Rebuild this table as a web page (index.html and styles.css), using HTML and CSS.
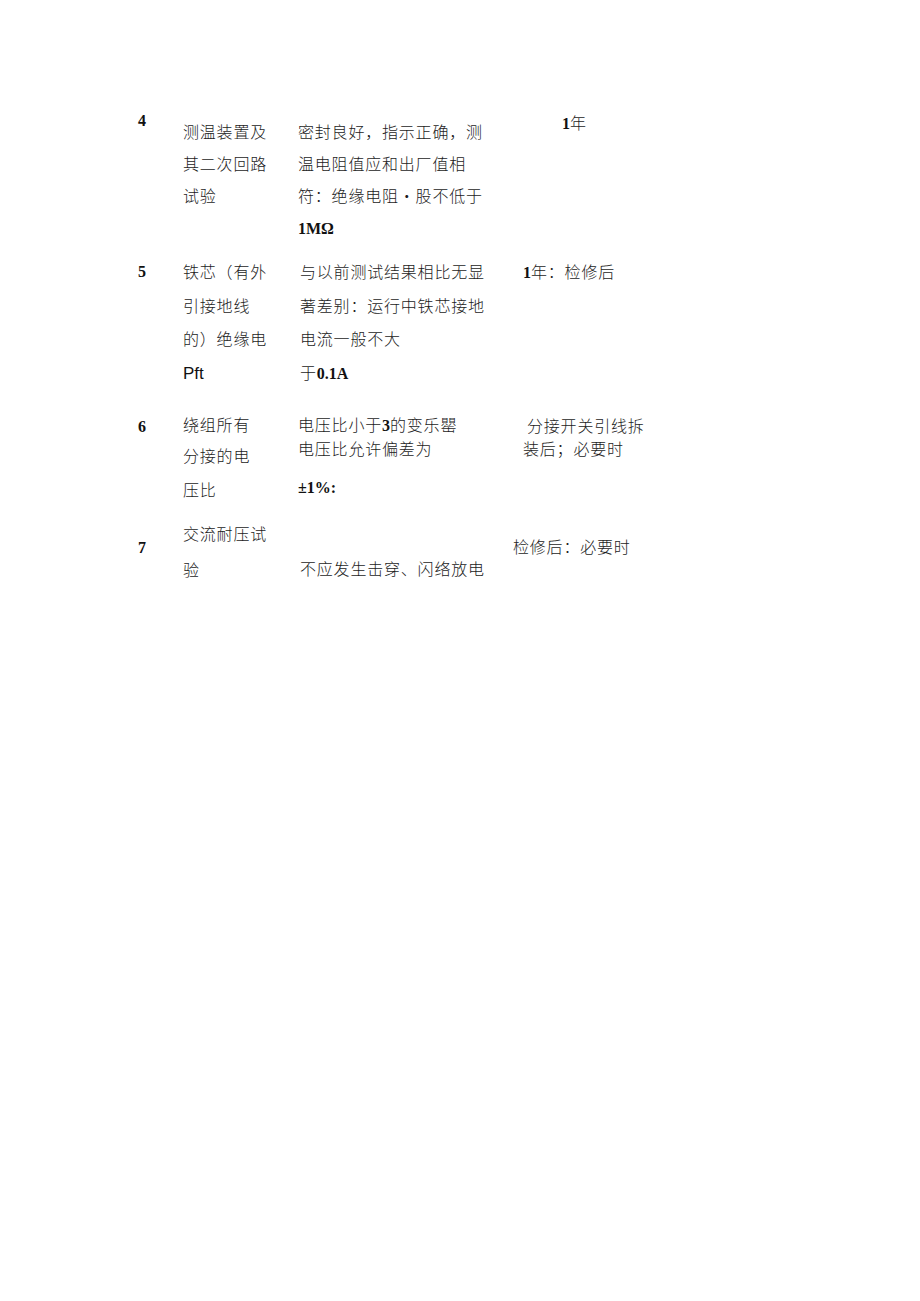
FILE: index.html
```html
<!DOCTYPE html>
<html lang="zh">
<head>
<meta charset="utf-8">
<title>试验项目</title>
<link rel="stylesheet" href="styles.css">
</head>
<body>
<div class="page">
  <div class="row r4">
    <div class="c1 num">4</div>
    <div class="c2">
      <div class="ln">测温装置及</div>
      <div class="ln">其二次回路</div>
      <div class="ln">试验</div>
    </div>
    <div class="c3">
      <div class="ln">密封良好，指示正确，测</div>
      <div class="ln">温电阻值应和出厂值相</div>
      <div class="ln">符：绝缘电阻·股不低于</div>
      <div class="ln"><b class="lat">1MΩ</b></div>
    </div>
    <div class="c4"><div class="ln"><b class="lat">1</b>年</div></div>
  </div>

  <div class="row r5">
    <div class="c1 num">5</div>
    <div class="c2">
      <div class="ln">铁芯（有外</div>
      <div class="ln">引接地线</div>
      <div class="ln">的）绝缘电</div>
      <div class="ln"><span class="sans">Pft</span></div>
    </div>
    <div class="c3">
      <div class="ln">与以前测试结果相比无显</div>
      <div class="ln">著差别：运行中铁芯接地</div>
      <div class="ln">电流一般不大</div>
      <div class="ln">于<b class="lat">0.1A</b></div>
    </div>
    <div class="c4"><div class="ln"><b class="lat">1</b>年：检修后</div></div>
  </div>

  <div class="row r6">
    <div class="c1 num">6</div>
    <div class="c2">
      <div class="ln">绕组所有</div>
      <div class="ln l2">分接的电</div>
      <div class="ln l3">压比</div>
    </div>
    <div class="c3">
      <div class="ln">电压比小于<b class="lat">3</b>的变乐罌</div>
      <div class="ln l2">电压比允许偏差为</div>
      <div class="ln l3"><b class="lat">±1%:</b></div>
    </div>
    <div class="c4">
      <div class="ln in">分接开关引线拆</div>
      <div class="ln l2">装后；必要时</div>
    </div>
  </div>

  <div class="row r7">
    <div class="c1 num">7</div>
    <div class="c2">
      <div class="ln">交流耐压试</div>
      <div class="ln l2">验</div>
    </div>
    <div class="c3">
      <div class="ln">不应发生击穿、闪络放电</div>
    </div>
    <div class="c4"><div class="ln">检修后：必要时</div></div>
  </div>
</div>
</body>
</html>
```

FILE: styles.css
```css
html, body {
  margin: 0;
  padding: 0;
  background: #ffffff;
}

.page {
  padding-left: 138px;
  font-family: "Noto Sans CJK SC", "Noto Sans", sans-serif;
  font-size: 16px;
  font-weight: 300;
  letter-spacing: 0.8px;
  color: #1c1c1c;
}

.row {
  display: grid;
  grid-template-columns: 45px 115px 215px 1fr;
  align-items: start;
}

.ln {
  line-height: 32px;
  height: 32px;
  white-space: nowrap;
}

.num {
  font-family: "Liberation Serif", serif;
  font-weight: 700;
  font-size: 16px;
  color: #111;
  line-height: 32px;
}

.lat {
  font-family: "Liberation Serif", serif;
  font-weight: 700;
  letter-spacing: 0;
  color: #111;
}

.sans {
  font-family: "Liberation Sans", sans-serif;
  font-weight: 400;
  font-size: 17px;
  letter-spacing: 0;
  color: #111;
}

/* row 4 */
.r4 { margin-top: 105px; }
.r4 .c2, .r4 .c3 { padding-top: 10px; }
.r4 .c4 { padding-left: 49px; padding-top: 1px; }

/* row 5 */
.r5 { margin-top: 12px; }
.r5 .c3 { padding-left: 2px; }
.r5 .ln { height: 33.5px; line-height: 33.5px; }
.r5 .num { line-height: 33.5px; }
.r5 .c4 { padding-left: 10px; }

/* row 6 */
.r6 { margin-top: 19px; }
.r6 .c1 { padding-top: 3px; }
.r6 .c2 .l2 { height: 30px; line-height: 30px; }
.r6 .c2 .l3 { height: 38px; line-height: 38px; }
.r6 .c3 .l2 { height: 16px; line-height: 16px; }
.r6 .c3 .l3 { height: 60px; line-height: 60px; }
.r6 .c4 { padding-left: 10px; padding-top: 1px; }
.r6 .c4 .in { padding-left: 4px; }
.r6 .c4 .l2 { height: 14px; line-height: 14px; }

/* row 7 */
.r7 { margin-top: 1px; }
.r7 .c1 { padding-top: 15px; }
.r7 .c2 .l2 { height: 40px; line-height: 40px; }
.r7 .c3 { padding-top: 35px; padding-left: 2px; }
.r7 .c4 { padding-left: 0; padding-top: 13px; }
```
